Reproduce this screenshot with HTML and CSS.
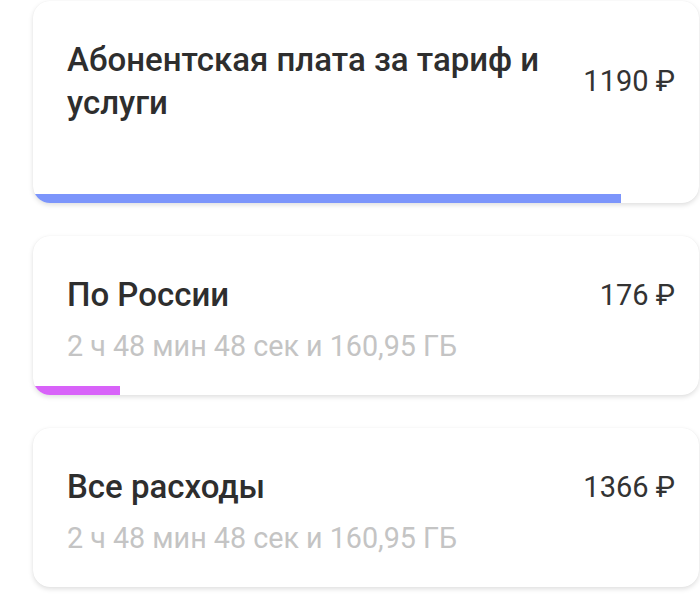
FILE: index.html
```html
<!DOCTYPE html>
<html lang="ru">
<head>
<meta charset="utf-8">
<link rel="stylesheet" href="styles.css">
</head>
<body>
<div class="list">
  <div class="card">
    <div class="body">
      <div class="row">
        <div class="title">Абонентская плата за тариф и услуги</div>
        <div class="price">1190 ₽</div>
      </div>
      <div class="sub"></div>
    </div>
    <div class="bar"><div class="fill blue" style="width:88.3%"></div></div>
  </div>
  <div class="card">
    <div class="body">
      <div class="row">
        <div class="title">По России</div>
        <div class="price">176 ₽</div>
      </div>
      <div class="sub">2 ч 48 мин 48 сек и 160,95 ГБ</div>
    </div>
    <div class="bar"><div class="fill pink" style="width:13%"></div></div>
  </div>
  <div class="card">
    <div class="body">
      <div class="row">
        <div class="title">Все расходы</div>
        <div class="price">1366 ₽</div>
      </div>
      <div class="sub">2 ч 48 мин 48 сек и 160,95 ГБ</div>
    </div>
    <div class="bar"></div>
  </div>
</div>
</body>
</html>
```

FILE: styles.css
```css
html, body {
  margin: 0;
  padding: 0;
  background: #ffffff;
}
body {
  font-family: Roboto, "Noto Sans", sans-serif;
  width: 700px;
  height: 594px;
  overflow: hidden;
}
.list {
  display: flex;
  flex-direction: column;
  gap: 33px;
  padding: 1px 1px 0 33px;
}
.card {
  background: #fff;
  border-radius: 17px;
  overflow: hidden;
  box-shadow: 0 2px 5px rgba(0, 0, 0, 0.13), 0 0 1px rgba(0, 0, 0, 0.06);
  display: flex;
  flex-direction: column;
}
.body {
  padding: 37px 24px 22px 34px;
}
.row {
  display: flex;
  align-items: center;
  justify-content: space-between;
  gap: 40px;
}
.title {
  font-size: 33px;
  line-height: 43px;
  font-weight: 500;
  color: #2e2e2e;
  max-width: 490px;
}
.price {
  font-size: 29px;
  line-height: 38px;
  color: #333;
  white-space: nowrap;
}
.sub {
  margin-top: 12px;
  font-size: 28.7px;
  line-height: 36px;
  height: 36px;
  color: #c4c4c4;
}
.bar {
  height: 9px;
}
.fill {
  height: 100%;
}
.blue { background: #7c95fb; }
.pink { background: #d862f9; }
```
